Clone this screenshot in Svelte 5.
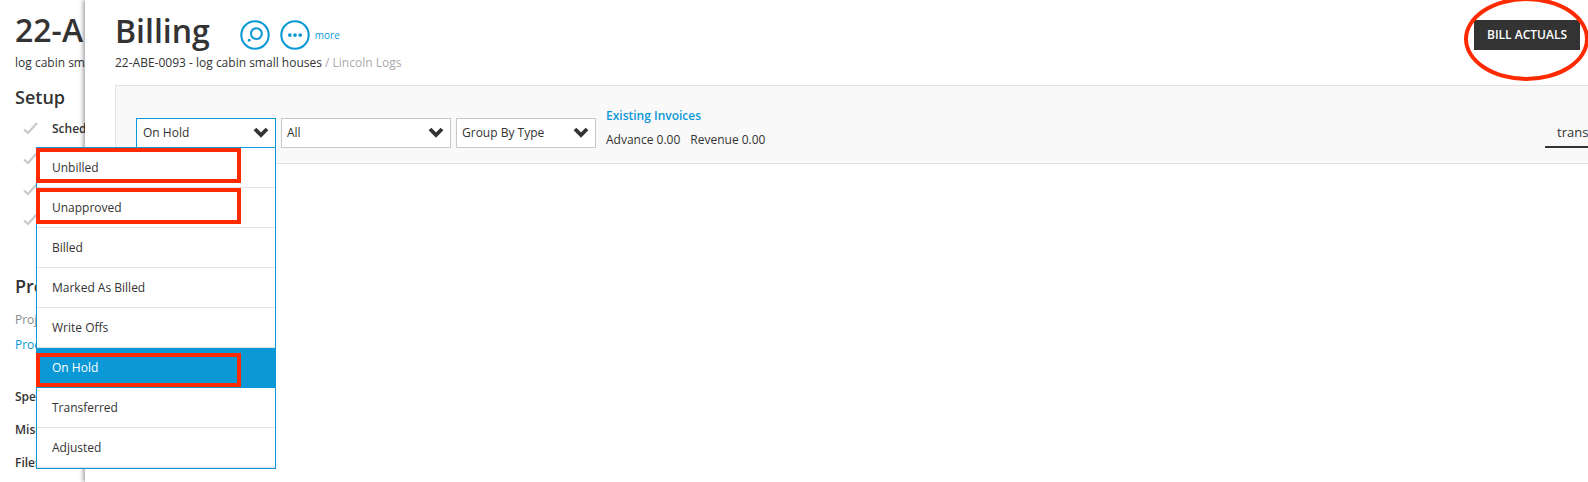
<script>
  const options = ['Unbilled', 'Unapproved', 'Billed', 'Marked As Billed', 'Write Offs', 'On Hold', 'Transferred', 'Adjusted'];
  const selected = 'On Hold';
  const checks = [
    { label: 'Schedule' }, { label: '' }, { label: '' }, { label: '' }
  ];
</script>

<div class="page">
  <aside class="side">
    <h1>22-ABE-0093</h1>
    <p class="sub">log cabin small houses</p>
    <h2>Setup</h2>
    <ul class="checks">
      {#each checks as c}
        <li>
          <svg width="15" height="13" viewBox="0 0 15 13"><path d="M1 7.5 L5 11 L14 1" fill="none" stroke="#c9c9c9" stroke-width="2.2"/></svg>
          <span>{c.label}</span>
        </li>
      {/each}
    </ul>
    <h2 class="proj">Project</h2>
    <p class="muted">Project</p>
    <p class="link">Process</p>
    <ul class="bold">
      <li>Specs</li><li>Misc</li><li>Files</li>
    </ul>
  </aside>

  <main class="panel">
    <header class="head">
      <div class="titles">
        <div class="title-row">
          <h1>Billing</h1>
          <svg class="ic first" width="30" height="30" viewBox="0 0 32 32" fill="none" stroke="#0b98d6">
            <circle cx="16" cy="16" r="14.6" stroke-width="2.2"/>
            <circle cx="17.5" cy="14.5" r="5.8" stroke-width="2.2"/>
            <circle cx="9.8" cy="21.6" r="1.5" fill="#0b98d6" stroke="none"/>
          </svg>
          <svg class="ic" width="30" height="30" viewBox="0 0 32 32" fill="none" stroke="#0b98d6">
            <circle cx="16" cy="16" r="14.6" stroke-width="2.2"/>
            <g fill="#0b98d6" stroke="none">
              <circle cx="10.5" cy="16" r="2"/><circle cx="16" cy="16" r="2"/><circle cx="21.5" cy="16" r="2"/>
            </g>
          </svg>
          <span class="more">more</span>
        </div>
        <p class="crumb">22-ABE-0093 - log cabin small houses <span>/ Lincoln Logs</span></p>
      </div>
      <button class="bill">BILL ACTUALS</button>
    </header>

    <section class="toolbar">
      <div class="select active w1">On Hold
        <svg class="chev" width="16" height="11" viewBox="0 0 16 11"><path d="M2 2 L8 8 L14 2" fill="none" stroke="#333" stroke-width="3.8"/></svg>
      </div>
      <div class="select w2">All
        <svg class="chev" width="16" height="11" viewBox="0 0 16 11"><path d="M2 2 L8 8 L14 2" fill="none" stroke="#333" stroke-width="3.8"/></svg>
      </div>
      <div class="select w3">Group By Type
        <svg class="chev" width="16" height="11" viewBox="0 0 16 11"><path d="M2 2 L8 8 L14 2" fill="none" stroke="#333" stroke-width="3.8"/></svg>
      </div>
      <div class="invoices">
        <a href="#inv">Existing Invoices</a>
        <p><span>Advance 0.00</span><span>Revenue 0.00</span></p>
      </div>
      <div class="tab">transactions</div>
    </section>
  </main>

  <ul class="menu">
    {#each options as o}
      <li class:sel={o === selected}>{o}</li>
    {/each}
  </ul>

  <div class="mark m1"></div>
  <div class="mark m2"></div>
  <div class="mark m3"></div>
  <div class="ellipse"></div>
</div>

<style>
  :global(body) { margin: 0; background: #fff; }
  .page {
    position: relative;
    width: 1588px;
    height: 482px;
    overflow: hidden;
    font-family: "Open Sans", "Noto Sans", sans-serif;
    color: #333;
    font-size: 12px;
  }
  h1, h2, p, ul { margin: 0; padding: 0; list-style: none; }

  .side { padding: 8px 0 0 15px; width: 300px; }
  .side h1 { font-size: 32px; line-height: 44px; font-weight: 600; }
  .sub { font-size: 12px; line-height: 16px; margin-top: 3px; }
  .side h2 { font-size: 18px; line-height: 24px; font-weight: 600; margin-top: 14px; }
  .checks { margin: 4px 0 0 8px; }
  .checks li { display: flex; align-items: center; gap: 14px; height: 30.5px; }
  .checks span { font-weight: 600; font-size: 12px; }
  .side h2.proj { margin-top: 39px; }
  .muted { color: #8a8a8a; margin-top: 11px; line-height: 22px; }
  .link { color: #0b98d6; line-height: 22px; margin-top: 3px; }
  .bold { margin-top: 30px; font-weight: 600; }
  .bold li { height: 33px; line-height: 22px; }

  .panel {
    position: absolute;
    left: 85px;
    top: 0;
    right: 0;
    bottom: 0;
    background: #fff;
    box-shadow: -2px 0 4px rgba(0, 0, 0, 0.35);
  }
  .head {
    display: flex;
    justify-content: space-between;
    height: 85px;
    padding: 0 8px 0 30px;
    box-sizing: border-box;
  }
  .title-row { display: flex; align-items: center; height: 46px; margin-top: 8px; }
  .title-row h1 { font-size: 32px; font-weight: 600; line-height: 44px; }
  .ic { flex: none; margin-left: 10px; margin-top: 8px; }
  .ic.first { margin-left: 30px; }
  .more { color: #0b98d6; font-size: 10px; margin: 8px 0 0 5px; }
  .crumb { font-size: 12px; line-height: 16px; margin-top: 1px; }
  .crumb span { color: #aaa; }
  .bill {
    align-self: flex-start;
    margin-top: 20px;
    width: 106px;
    height: 30px;
    border: 0;
    background: #333;
    color: #fff;
    font: 600 12px "Open Sans", sans-serif;
    padding: 0 0 2px;
  }

  .toolbar {
    margin-left: 30px;
    height: 79px;
    box-sizing: border-box;
    background: #f9f9f9;
    border: 1px solid #e2e2e2;
    border-right: 0;
    display: flex;
    padding: 23px 0 0 20px;
    gap: 5px;
    position: relative;
  }
  .select {
    height: 30px;
    box-sizing: border-box;
    border: 1px solid #c9c9c9;
    background: #fff;
    padding: 0 5px;
    line-height: 27px;
    font-size: 12px;
    position: relative;
    margin-top: 9px;
  }
  .select.active { border-color: #0b98d6; padding-left: 6px; }
  .w1 { width: 140px; }
  .w2 { width: 170px; }
  .w3 { width: 140px; }
  .chev { position: absolute; right: 6px; top: 8px; }
  .invoices { margin: -2px 0 0 5px; }
  .invoices a { color: #0b98d6; font-weight: 600; text-decoration: none; line-height: 18px; display: block; }
  .invoices p { display: flex; gap: 10px; margin-top: 6px; line-height: 18px; }
  .tab {
    position: absolute;
    left: 1429px;
    top: 33px;
    width: 60px;
    height: 29px;
    box-sizing: border-box;
    padding-left: 12px;
    line-height: 26px;
    border-bottom: 2px solid #333;
    white-space: nowrap;
    overflow: hidden;
    font-size: 13px;
  }

  .menu {
    position: absolute;
    left: 36px;
    top: 147px;
    width: 240px;
    height: 322px;
    box-sizing: border-box;
    background: #fff;
    border: 1px solid #0b98d6;
    font-size: 12px;
  }
  .menu li {
    height: 40px;
    box-sizing: border-box;
    padding-left: 15px;
    line-height: 39px;
    border-bottom: 1px solid #e2e2e2;
  }
  .menu li.sel { background: #0b98d6; color: #fff; border-bottom-color: #0b98d6; }

  .mark { position: absolute; box-sizing: border-box; border: 4px solid #ff2a00; left: 36px; width: 205px; }
  .m1 { top: 148px; height: 35px; }
  .m2 { top: 188px; height: 36px; }
  .m3 { top: 353px; height: 34px; }
  .ellipse {
    position: absolute;
    left: 1464px;
    top: -3px;
    width: 125px;
    height: 84px;
    box-sizing: border-box;
    border: 4px solid #ff2a00;
    border-radius: 50%;
  }
</style>
